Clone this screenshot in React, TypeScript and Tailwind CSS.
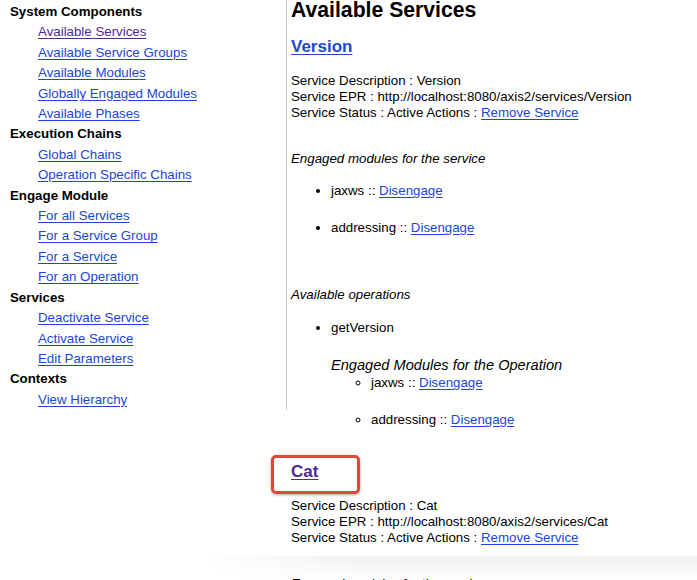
import React from "react";

const menu = [
  {
    title: "System Components",
    links: [
      { label: "Available Services", visited: true },
      { label: "Available Service Groups" },
      { label: "Available Modules" },
      { label: "Globally Engaged Modules" },
      { label: "Available Phases" },
    ],
  },
  {
    title: "Execution Chains",
    links: [{ label: "Global Chains" }, { label: "Operation Specific Chains" }],
  },
  {
    title: "Engage Module",
    links: [
      { label: "For all Services" },
      { label: "For a Service Group" },
      { label: "For a Service" },
      { label: "For an Operation" },
    ],
  },
  {
    title: "Services",
    links: [
      { label: "Deactivate Service" },
      { label: "Activate Service" },
      { label: "Edit Parameters" },
    ],
  },
  {
    title: "Contexts",
    links: [{ label: "View Hierarchy" }],
  },
];

const Link = ({
  children,
  visited,
}: {
  children: React.ReactNode;
  visited?: boolean;
}) => (
  <a
    href="#"
    className={
      visited
        ? "text-[#4f2b8e] underline underline-offset-[2px]"
        : "text-[#2146d6] underline underline-offset-[2px]"
    }
  >
    {children}
  </a>
);

const App: React.FC = () => {
  return (
    <div className="relative h-[580px] overflow-hidden bg-white text-[13.3px] text-black font-['Liberation_Sans',Arial,sans-serif]">
      <div className="flex items-start">
        {/* Sidebar */}
        <nav className="w-[287px] shrink-0 border-r border-[#c9c9c9] pl-[10px] pt-[2px] leading-[20.4px]">
          {menu.map((section) => (
            <div key={section.title}>
              <div className="font-bold">{section.title}</div>
              {section.links.map((l) => (
                <div key={l.label} className="pl-[28px]">
                  <Link visited={l.visited}>{l.label}</Link>
                </div>
              ))}
            </div>
          ))}
        </nav>

        {/* Content */}
        <main className="flex-1 pl-[4px] leading-[16px]">
          <h1 className="-mt-[2px] text-[21.2px] font-bold leading-[24px]">
            Available Services
          </h1>

          {/* Version */}
          <h2 className="mt-[15px] text-[17px] font-bold leading-[20px]">
            <Link>Version</Link>
          </h2>
          <div className="mt-[16px]">
            <div>Service Description : Version</div>
            <div>Service EPR : http://localhost:8080/axis2/services/Version</div>
            <div>
              Service Status : Active Actions : <Link>Remove Service</Link>
            </div>
          </div>

          <div className="mt-[30px] italic">Engaged modules for the service</div>
          <ul className="list-disc pl-[40px]">
            <li className="mt-[16px]">
              jaxws :: <Link>Disengage</Link>
            </li>
            <li className="mt-[21px]">
              addressing :: <Link>Disengage</Link>
            </li>
          </ul>

          <div className="mt-[51px] italic">Available operations</div>
          <ul className="list-disc pl-[40px]">
            <li className="mt-[17px]">
              getVersion
              <div className="mt-[20px] text-[14.6px] italic leading-[18px]">
                Engaged Modules for the Operation
              </div>
              <ul className="list-[circle] pl-[40px]">
                <li className="mt-[1px]">
                  jaxws :: <Link>Disengage</Link>
                </li>
                <li className="mt-[21px]">
                  addressing :: <Link>Disengage</Link>
                </li>
              </ul>
            </li>
          </ul>

          {/* Cat */}
          <h2 className="relative mt-[34px] text-[17px] font-bold leading-[20px]">
            <Link visited>Cat</Link>
            <span className="pointer-events-none absolute left-[-20px] top-[-7px] h-[39px] w-[89px] rounded-[5px] border-[3px] border-[#d94a3b] shadow-[0_1px_3px_rgba(0,0,0,0.35)]" />
          </h2>
          <div className="mt-[16px]">
            <div>Service Description : Cat</div>
            <div>Service EPR : http://localhost:8080/axis2/services/Cat</div>
            <div>
              Service Status : Active Actions : <Link>Remove Service</Link>
            </div>
          </div>

          <div className="mt-[30px] italic">Engaged modules for the service</div>
        </main>
      </div>

      {/* bottom shadow of the capture */}
      <div className="pointer-events-none absolute bottom-0 left-[200px] right-0 h-[24px] bg-[linear-gradient(to_bottom,rgba(0,0,0,0.06),rgba(0,0,0,0))] [mask-image:linear-gradient(to_right,transparent,black_160px)]" />
    </div>
  );
};

export default App;
